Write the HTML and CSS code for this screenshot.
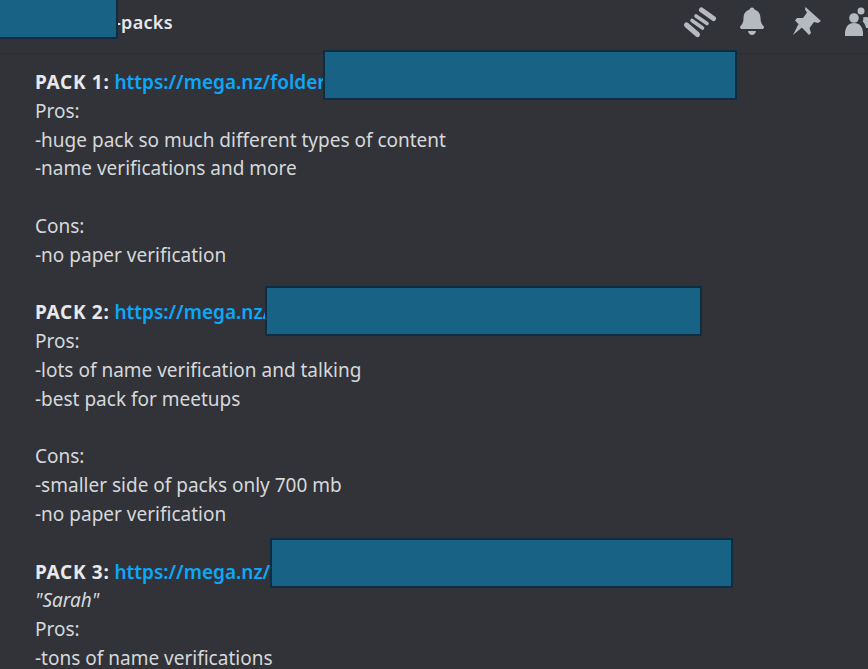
FILE: index.html
```html
<!DOCTYPE html>
<html lang="en">
<head>
<meta charset="utf-8">
<title>packs</title>
<link rel="stylesheet" href="styles.css">
</head>
<body>
<div class="app">
  <header class="topbar">
    <span class="channel">-packs</span>
    <div class="tools">
      <svg class="icon" viewBox="0 0 40 36"><g class="bars"><path class="wide" d="M19.500 6l12 8.500"/><path d="M14 12l11 7.500"/><path d="M10 16.500l10.500 7.500"/><path class="wide" d="M4.500 21l11 9.500"/></g></svg>
      <svg class="icon" viewBox="0 0 40 36"><g class="solid"><path d="M17 3.500c1.200 0 2.200.8 2.400 2C24 7 25.500 10.500 25.500 14c0 4 1 6 3 8 .8.800.6 3-1.500 3H7c-2 0-2.300-2.200-1.500-3 2-2 3-4 3-8 0-3.500 1.500-7 6.100-8.500.2-1.200 1.200-2 2.400-2z"/><path d="M13 27h8c-.5 2.500-2 4-4 4s-3.500-1.500-4-4z"/></g></svg>
      <svg class="icon" viewBox="0 0 40 36"><g class="solid"><path d="M17.500 3L33 17l-3 2-4-1-4.500 6 1.500 5-2 2L7 16.500l2-2.500 6 0 4-5.500-2-3z"/><path d="M10.500 20l3.500 3.500-9 7.500z"/></g></svg>
      <svg class="icon" viewBox="0 0 40 36"><g class="solid"><circle cx="13" cy="14" r="4.800"/><path d="M4 32c-.5-9 3-13 9-13s9.500 4 9 13z"/><circle cx="20" cy="7" r="3.500"/><path d="M22 13.500c2-1 5-.5 7 1V24h-4c-.5-3-2-5.500-3.500-6.500 1-1 1-2.500.5-4z"/></g></svg>
    </div>
  </header>
  <main class="message">
    <div class="text"><strong>PACK 1:</strong> <a href="#">https://mega.nz/folder</a>
Pros:
-huge pack so much different types of content
-name verifications and more

Cons:
-no paper verification

<strong>PACK 2:</strong> <a href="#">https://mega.nz/</a>
Pros:
-lots of name verification and talking
-best pack for meetups

Cons:
-smaller side of packs only 700 mb
-no paper verification

<strong>PACK 3:</strong> <a href="#">https://mega.nz/</a>
<em>"Sarah"</em>
Pros:
-tons of name verifications</div>
  </main>
  <div class="redact r-title"></div>
  <div class="redact r-one"></div>
  <div class="redact r-two"></div>
  <div class="redact r-three"></div>
</div>
</body>
</html>
```
FILE: styles.css
```css
html, body {
  margin: 0;
  padding: 0;
  height: 100%;
  background: #313338;
  overflow: hidden;
}
.app {
  position: relative;
  width: 868px;
  height: 669px;
  overflow: hidden;
  font-family: "Noto Sans", sans-serif;
  color: #d6d8db;
}
.topbar {
  height: 54px;
  box-sizing: border-box;
  border-bottom: 1px solid #2c2e33;
  display: flex;
  align-items: center;
  padding-left: 115px;
}
.channel {
  font-size: 18px;
  font-weight: 600;
  letter-spacing: .3px;
  color: #e6e7e9;
  margin-top: -10px;
}
.tools {
  margin-left: auto;
  margin-right: -13px;
  align-self: flex-start;
  margin-top: 4px;
  display: flex;
  gap: 13px;
}
.icon {
  width: 40px;
  height: 36px;
  display: block;
}
.solid {
  fill: #b5bac1;
}
.bars {
  fill: none;
  stroke: #b5bac1;
  stroke-width: 3.600px;
  stroke-linecap: round;
}
.bars .wide {
  stroke-width: 5px;
}
.message {
  padding: 14px 0 0 35px;
}
.text {
  white-space: pre-line;
  font-size: 19px;
  line-height: 28.8px;
  color: #d6d8db;
}
.text strong {
  font-weight: 700;
  letter-spacing: .7px;
  color: #e8e9eb;
}
.text a {
  color: #0aa8fa;
  font-weight: 600;
  text-decoration: none;
}
.redact {
  position: absolute;
  box-sizing: border-box;
  background: #176285;
  border: 2px solid #0c2d42;
}
.r-title { left: -2px; top: -2px; width: 120px; height: 41px; }
.r-one { left: 323px; top: 50px; width: 414px; height: 50px; }
.r-two { left: 265px; top: 286px; width: 437px; height: 50px; }
.r-three { left: 270px; top: 538px; width: 463px; height: 50px; }
```
